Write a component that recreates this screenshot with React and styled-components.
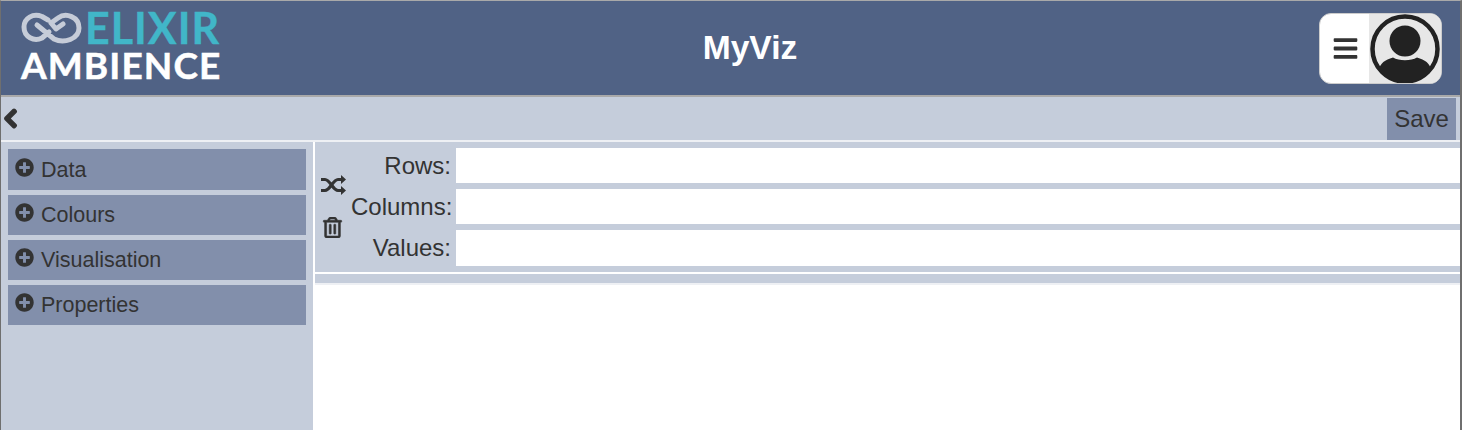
import React from "react";
import styled, { createGlobalStyle } from "styled-components";
import { FaBars, FaChevronLeft, FaPlusCircle, FaRegTrashAlt } from "react-icons/fa";

const GlobalStyle = createGlobalStyle`
  html, body {
    margin: 0;
    height: 100%;
    overflow: hidden;
    background: #fff;
  }
  body {
    font-family: "Liberation Sans", Arial, sans-serif;
    color: #333;
  }
`;

const Page = styled.div`
  width: 1462px;
  height: 430px;
  display: flex;
  flex-direction: column;
  box-sizing: border-box;
  border-top: 1px solid #a9a9a9;
  border-left: 1px solid #6f6f6f;
  border-right: 2px solid #6f6f6f;
  overflow: hidden;
`;

const Header = styled.header`
  height: 94px;
  flex: none;
  display: grid;
  grid-template-columns: 1fr auto 1fr;
  align-items: center;
  background: #506285;
  border-bottom: 2px solid #a9a9a9;
`;

const Logo = styled.div`
  padding-left: 20px;
  display: flex;
  flex-direction: column;
  font-family: Lato, sans-serif;
  font-weight: 700;
  line-height: 36px;
  margin-top: -5px;
`;

const LogoTop = styled.div`
  display: flex;
  align-items: center;
  gap: 3px;
  height: 38px;
  color: #41b6c8;
  font-size: 43px;
  letter-spacing: 1px;
  -webkit-text-stroke: 0.4px #41b6c8;
`;

const LogoBottom = styled.div`
  color: #fff;
  font-size: 37px;
  letter-spacing: 1.1px;
  -webkit-text-stroke: 0.5px #fff;
`;

const Title = styled.h1`
  margin: -1px 0 0;
  color: #fff;
  font-size: 33.6px;
  font-weight: 700;
  position: relative;
  left: 19.5px;
`;

const UserMenu = styled.div`
  justify-self: end;
  margin-right: 18px;
  margin-top: 1px;
  width: 123px;
  height: 71px;
  box-sizing: border-box;
  display: flex;
  border: 1px solid #ccc;
  border-radius: 12px;
  overflow: hidden;
  background: #fff;
`;

const MenuButton = styled.div`
  width: 49px;
  display: flex;
  align-items: center;
  justify-content: center;
  color: #333;
  font-size: 27px;
  padding-left: 2px;
  box-sizing: border-box;
`;

const Avatar = styled.div`
  flex: 1;
  display: flex;
  align-items: center;
  justify-content: center;
  background: #e7e7e7;
`;

const Toolbar = styled.div`
  height: 43px;
  flex: none;
  display: flex;
  align-items: center;
  justify-content: space-between;
  background: #c5cddb;
  border-bottom: 2px solid #eef0f4;
  padding-right: 4px;
`;

const BackIcon = styled(FaChevronLeft)`
  font-size: 21px;
  color: #333;
  margin-left: -1px;
  stroke: #333;
  stroke-width: 50;
`;

const SaveButton = styled.button`
  width: 69px;
  height: 42px;
  align-self: flex-start;
  margin-top: 1px;
  border: 0;
  padding: 0;
  background: #828fab;
  color: #333;
  font-family: inherit;
  font-size: 24px;
`;

const Main = styled.div`
  flex: 1;
  display: flex;
  min-height: 0;
`;

const Sidebar = styled.aside`
  width: 312px;
  flex: none;
  box-sizing: border-box;
  background: #c5cddb;
  padding: 7px 7px 0;
  display: flex;
  flex-direction: column;
  gap: 5px;
`;

const Section = styled.div`
  height: 40px;
  box-sizing: border-box;
  background: #828fab;
  display: flex;
  align-items: center;
  gap: 7px;
  padding-left: 7px;
  font-size: 21.5px;
  color: #333;

  &:first-child {
    height: 41px;
    padding-top: 1px;
  }
`;

const PlusIcon = styled(FaPlusCircle)`
  font-size: 19px;
  margin-top: -5px;
`;

const Content = styled.div`
  flex: 1;
  margin-left: 2px;
  min-width: 0;
  background: #fff;
`;

const Shelves = styled.div`
  height: 130px;
  box-sizing: border-box;
  background: #c5cddb;
  display: flex;
  padding-top: 6px;
`;

const ShelfIcons = styled.div`
  width: 36px;
  flex: none;
  display: flex;
  flex-direction: column;
  align-items: center;
  padding-top: 27px;
  gap: 22px;
  color: #333;
`;

const TrashIcon = styled(FaRegTrashAlt)`
  font-size: 21px;
  margin-left: -1px;
  stroke: #333;
  stroke-width: 14;
`;

const ShelfRows = styled.div`
  flex: 1;
  display: flex;
  flex-direction: column;
  gap: 6px;
  min-width: 0;
`;

const ShelfRow = styled.div`
  display: flex;
  height: ${({ $tall }) => ($tall ? "36px" : "35px")};
`;

const ShelfLabel = styled.label`
  width: 105px;
  flex: none;
  box-sizing: border-box;
  padding-right: 5px;
  text-align: right;
  font-size: 24px;
  line-height: 35px;
  color: #333;
`;

const ShelfInput = styled.div`
  flex: 1;
  background: #fff;
`;

const Band = styled.div`
  height: 9px;
  margin-top: 2px;
  background: #c5cddb;
  border-bottom: 2px solid #eef0f4;
`;

const sections = ["Data", "Colours", "Visualisation", "Properties"];
const shelves = [
  { name: "Rows:" },
  { name: "Columns:" },
  { name: "Values:", tall: true },
];

const Profile = () => (
  <svg width="72" height="70" viewBox="0 0 72 70">
    <circle cx="36" cy="35" r="32.5" fill="#e7e7e7" stroke="#222" strokeWidth="4.5" />
    <circle cx="36" cy="27" r="15.5" fill="#222" />
    <path
      d="M10 56 C11 49 16 46 24 43.5 C30 47 42 47 48 43.5 C56 46 61 49 62 56 C56 64 47 68 36 68 C25 68 16 64 10 56 Z"
      fill="#222"
    />
  </svg>
);

const InfinityMark = () => (
  <svg width="61" height="36" viewBox="0 0 61 36">
    <path
      d="M27 10 L21 6.5 C12 3 3 8 3 17 C3 27 13 32 21 28 L28 22 M16 15 L33 29 C43 34 58 29 58 18 C58 7 45 2 37 8 L30 13 L35 19 L42 14"
      fill="none"
      stroke="#c6ccd8"
      strokeWidth="5"
      strokeLinecap="round"
      strokeLinejoin="round"
    />
  </svg>
);

const Shuffle = () => (
  <svg width="25" height="20" viewBox="0 0 25 20">
    <path
      d="M0 4.5 H4 C9 4.5 12 15.5 17 15.5 H21 M0 15.5 H4 C9 15.5 12 4.5 17 4.5 H21"
      fill="none"
      stroke="#333"
      strokeWidth="3.2"
    />
    <path d="M20 0 L25 4.5 L20 9 Z M20 11 L25 15.5 L20 20 Z" fill="#333" />
  </svg>
);

export default function App() {
  return (
    <>
      <GlobalStyle />
      <Page>
        <Header>
          <Logo>
            <LogoTop>
              <InfinityMark />
              ELIXIR
            </LogoTop>
            <LogoBottom>AMBIENCE</LogoBottom>
          </Logo>
          <Title>MyViz</Title>
          <UserMenu>
            <MenuButton>
              <FaBars />
            </MenuButton>
            <Avatar>
              <Profile />
            </Avatar>
          </UserMenu>
        </Header>
        <Toolbar>
          <BackIcon />
          <SaveButton>Save</SaveButton>
        </Toolbar>
        <Main>
          <Sidebar>
            {sections.map((name) => (
              <Section key={name}>
                <PlusIcon />
                {name}
              </Section>
            ))}
          </Sidebar>
          <Content>
            <Shelves>
              <ShelfIcons>
                <Shuffle />
                <TrashIcon />
              </ShelfIcons>
              <ShelfRows>
                {shelves.map((shelf) => (
                  <ShelfRow key={shelf.name} $tall={shelf.tall}>
                    <ShelfLabel>{shelf.name}</ShelfLabel>
                    <ShelfInput />
                  </ShelfRow>
                ))}
              </ShelfRows>
            </Shelves>
            <Band />
          </Content>
        </Main>
      </Page>
    </>
  );
}
